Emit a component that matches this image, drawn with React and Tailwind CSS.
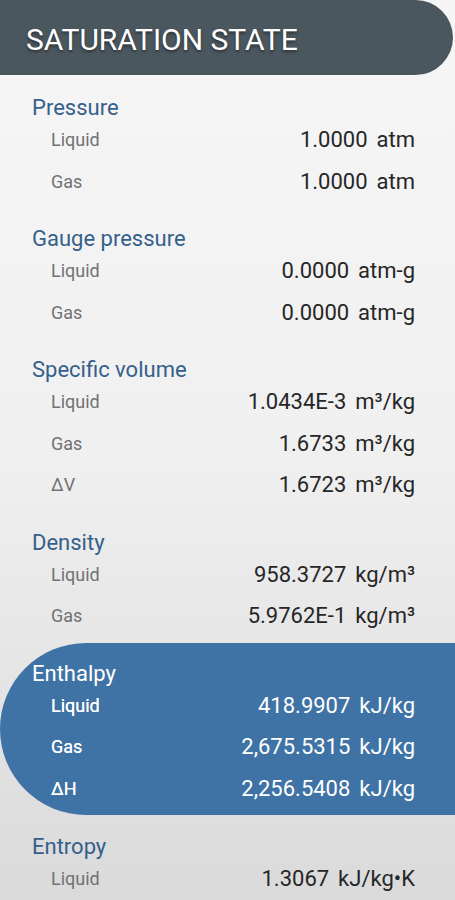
import React from "react";

const sections = [
    {
        title: "Pressure",
        rows: [
            ["Liquid", "1.0000", "atm"],
            ["Gas", "1.0000", "atm"],
        ],
    },
    {
        title: "Gauge pressure",
        rows: [
            ["Liquid", "0.0000", "atm-g"],
            ["Gas", "0.0000", "atm-g"],
        ],
    },
    {
        title: "Specific volume",
        rows: [
            ["Liquid", "1.0434E-3", "m³/kg"],
            ["Gas", "1.6733", "m³/kg"],
            ["ΔV", "1.6723", "m³/kg"],
        ],
    },
    {
        title: "Density",
        rows: [
            ["Liquid", "958.3727", "kg/m³"],
            ["Gas", "5.9762E-1", "kg/m³"],
        ],
    },
    {
        title: "Enthalpy",
        active: true,
        rows: [
            ["Liquid", "418.9907", "kJ/kg"],
            ["Gas", "2,675.5315", "kJ/kg"],
            ["ΔH", "2,256.5408", "kJ/kg"],
        ],
    },
    {
        title: "Entropy",
        rows: [["Liquid", "1.3067", "kJ/kg•K"]],
    },
];

const Section = ({ title, rows, active }) => {
    return (
        <div
            className={
                active
                    ? "-mt-[19.5px] mb-[21px] pt-[19.5px] pb-[6px] bg-[#3f73a5] rounded-l-full"
                    : "mb-[26px]"
            }
        >
            <h2
                className={
                    active
                        ? "h-[22px] leading-[22px] pl-[32px] text-[22px] text-white"
                        : "h-[22px] leading-[22px] pl-[32px] text-[22px] text-[#34608b]"
                }
            >
                {title}
            </h2>

            {rows.map(([label, value, unit]) => (
                <div
                    key={label}
                    className="h-[41.5px] flex items-center justify-between pl-[51px] pr-[40px]"
                >
                    <span
                        className={
                            active
                                ? "text-[18px] text-white [text-shadow:0_0_0.4px_#fff]"
                                : "text-[18px] text-[#727272]"
                        }
                    >
                        {label}
                    </span>

                    <span
                        className={
                            active
                                ? "flex gap-[9px] text-[22px] text-white"
                                : "flex gap-[9px] text-[22px] text-[#262626]"
                        }
                    >
                        <span>{value}</span>
                        <span>{unit}</span>
                    </span>
                </div>
            ))}
        </div>
    );
};

const App = () => {
    return (
        <div
            className="h-[900px] w-[455px] overflow-hidden bg-gradient-to-b from-[#f6f6f6] via-[#f0f0f0] to-[#dadada]"
            style={{ fontFamily: "Roboto, 'Noto Sans', sans-serif" }}
        >
            <div className="h-[75px] w-[453px] bg-[#4b575e] rounded-r-full flex items-center pl-[26px] pt-[4px]">
                <h1 className="text-[30px] text-white [text-shadow:0_2px_3px_rgba(0,0,0,0.45)]">
                    SATURATION STATE
                </h1>
            </div>

            <div className="pt-[22px]">
                {sections.map((section) => (
                    <Section
                        key={section.title}
                        title={section.title}
                        rows={section.rows}
                        active={section.active}
                    />
                ))}
            </div>
        </div>
    );
};

export default App;
